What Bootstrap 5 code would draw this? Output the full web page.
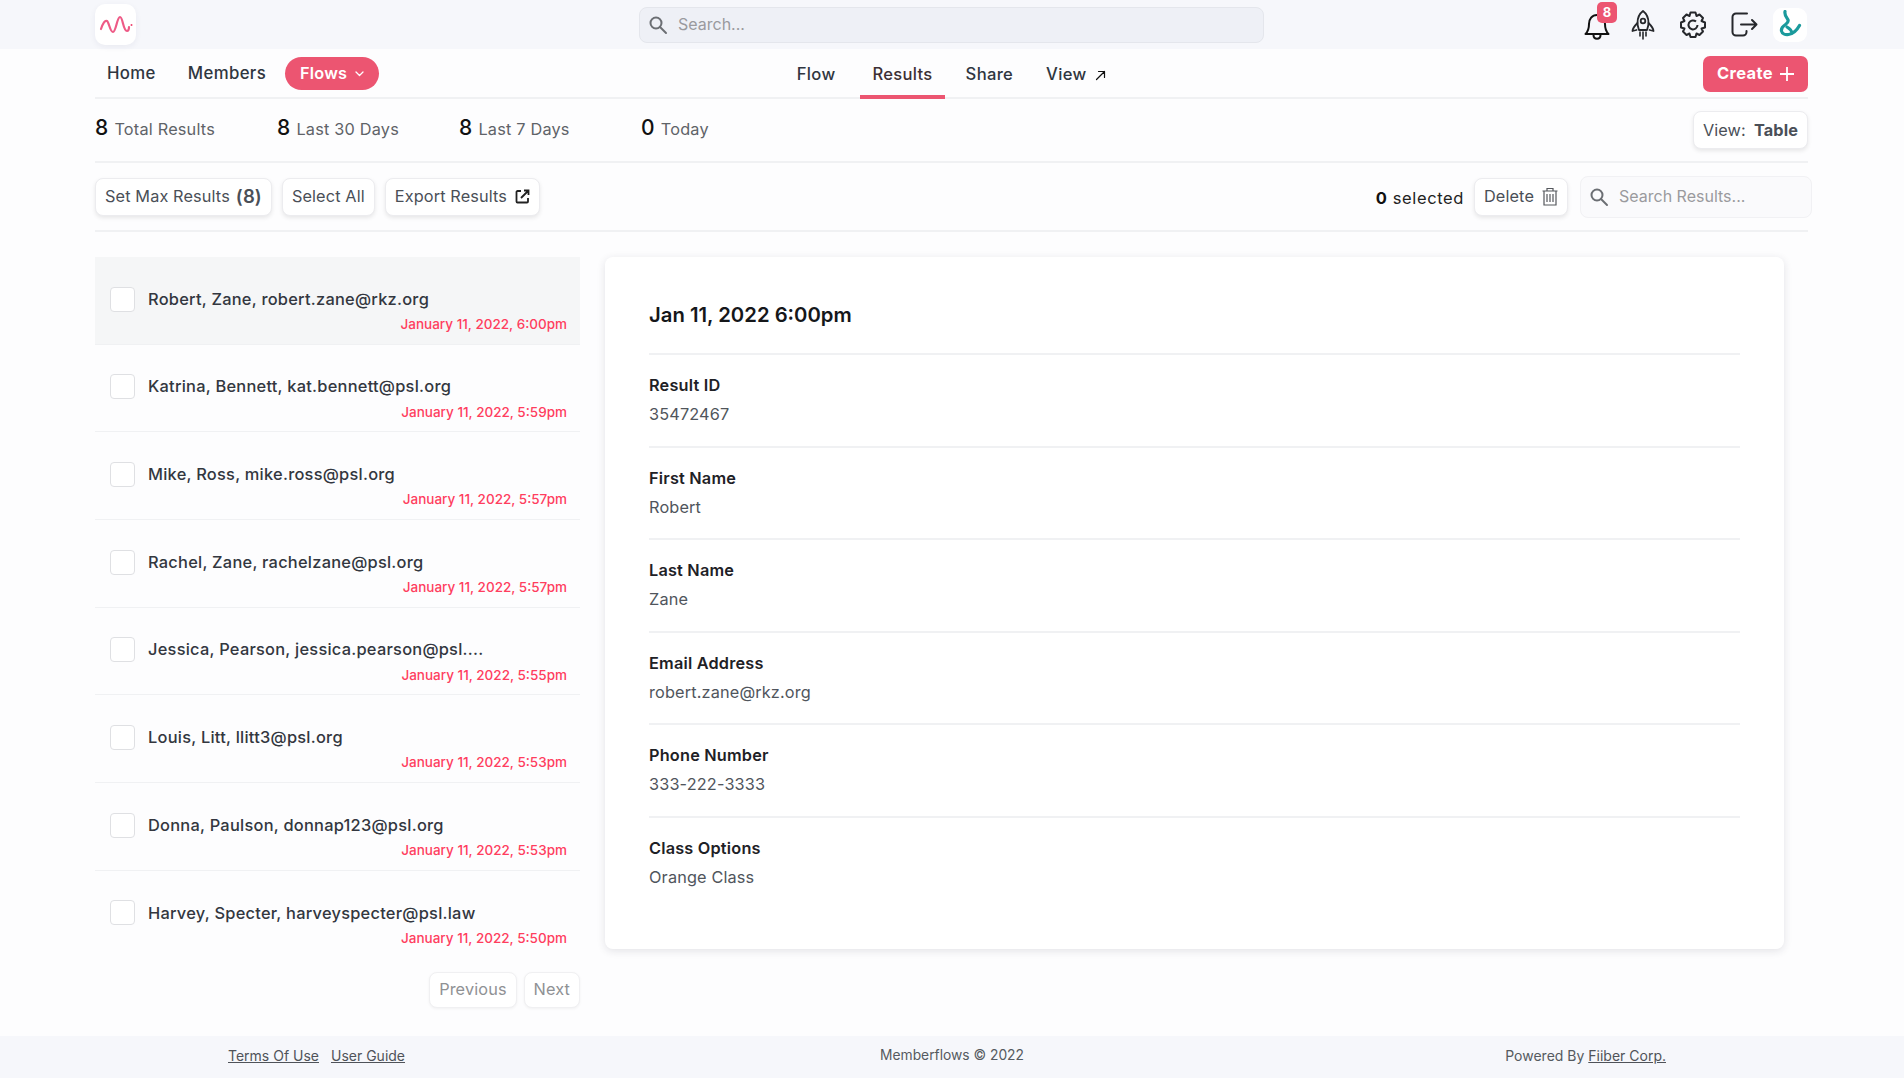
<!DOCTYPE html>
<html lang="en">
<head>
<meta charset="utf-8">
<title>Memberflows Results</title>
<link href="https://cdn.jsdelivr.net/npm/bootstrap@5.3.0/dist/css/bootstrap.min.css" rel="stylesheet">
<style>
html,body{height:100%;}
body{font-family:Inter,"Liberation Sans",sans-serif;background:#fdfdfe;color:#343a40;font-size:16px;overflow:hidden;}
.page{height:1078px;display:flex;flex-direction:column;}
.topstrip{height:49px;background:#f6f7fb;padding:0 96px 0 95px;display:grid;grid-template-columns:1fr 625px 1fr;align-items:center;flex:none;}
.logo-tile{width:41px;height:41px;background:#fff;border-radius:10px;box-shadow:0 2px 6px rgba(30,40,80,.06);display:flex;align-items:center;justify-content:center;}
.top-search{height:36px;background:#eef0f6;border:1px solid #e4e6ec;border-radius:8px;}
.search-in{border:0;background:transparent;outline:0;flex:1;min-width:0;font-size:16px;color:#333;padding:0;margin:-2px 0 0 2px;}
.search-in::placeholder{color:#9a9a9e;}
.top-icons{display:flex;justify-content:flex-end;align-items:center;}
.bell-wrap{position:relative;width:26px;height:30px;margin-right:21px;}
.bell-count{position:absolute;left:13px;top:-8px;width:20px;height:21px;background:#ec5571;color:#fff;border-radius:5px;font-size:13px;font-weight:700;line-height:21px;text-align:center;}
.avatar-tile{width:34px;height:34px;background:#fff;border-radius:9px;display:flex;align-items:center;justify-content:center;margin-left:15px;margin-right:1px;}
.shell{margin:0 96px 0 95px;flex:1;display:flex;flex-direction:column;min-height:0;}
.navline{height:50px;display:grid;grid-template-columns:1fr auto 1fr;align-items:center;border-bottom:2px solid #f0f1f3;flex:none;}
.mainlink{color:#2f3640;font-weight:500;text-decoration:none;font-size:16.8px;letter-spacing:.35px;}
.mainlinks{padding-left:12px;gap:32px;}
.flows-pill{background:#ec5571;color:#fff;font-weight:600;border-radius:17px;height:33px;width:94px;margin-left:-13px;display:flex;align-items:center;justify-content:center;gap:8px;font-size:16.3px;letter-spacing:.2px;text-decoration:none;}
.tabset{display:flex;gap:9px;height:49px;}
.tabset a{padding:0 12px;line-height:50px;color:#2f3640;font-weight:500;text-decoration:none;font-size:16.6px;letter-spacing:.3px;height:50px;}
.tabset a:first-child{margin-right:4px;}
.tabset a.on{border-bottom:4px solid #ec5571;color:#3d3035;}
.create-btn{background:#ec5571;color:#fff;font-weight:700;font-size:16.5px;letter-spacing:.4px;height:36px;width:105px;padding:0;border-radius:7px;border:0;display:flex;align-items:center;justify-content:center;gap:7px;}
.statline{height:64px;display:flex;align-items:center;border-bottom:2px solid #f0f1f3;flex:none;}
.stat-cell{width:182px;display:flex;align-items:baseline;gap:6px;color:#5f6368;font-size:16.3px;letter-spacing:.2px;padding-bottom:4px;}
.stat-cell b{font-weight:500;font-size:21px;color:#111;}
.soft-btn{background:#fff;border:1px solid #ececef;border-radius:8px;box-shadow:0 2px 4px rgba(0,0,0,.09);color:#4a4f57;font-size:16.3px;letter-spacing:.12px;height:38px;padding:0 9px;display:inline-flex;align-items:center;gap:8px;white-space:nowrap;}
.soft-btn:hover{background:#fff;}
.max-num{font-weight:600;font-size:18.5px;margin-left:-2px;}
.toolline{height:69px;display:flex;align-items:center;border-bottom:2px solid #f0f1f3;flex:none;gap:10px;position:relative;}
.sel-count{color:#222;font-size:16.5px;letter-spacing:.6px;margin-left:auto;padding-top:4px;}
.sel-count b{font-weight:700;color:#111;}
.res-search{width:232px;height:42px;margin-right:-4px;background:#fafafc;border:1px solid #f1f1f4;border-radius:8px;margin-left:2px;}
.body-split{display:flex;flex:1;min-height:0;padding-top:25px;gap:25px;}
.left-col{width:485px;flex:none;}
.rec{height:87.7px;background:transparent;border:0;border-bottom:2px solid #f0f1f3;padding:0 13px 0 15px;display:block;}
.rec.picked{background:#f5f6f7;}
.rec-top{display:flex;align-items:center;gap:13px;padding-top:27px;height:57px;}
.tick{width:25px;height:25px;background:#fff;border:1px solid #dfe0e3;border-radius:4px;flex:none;}
.rec-name{font-weight:500;font-size:16.4px;letter-spacing:.25px;color:#33373f;white-space:nowrap;}
.rec-date{color:#ff3e5e;font-weight:500;font-size:13.5px;text-align:right;}
.pager{display:flex;justify-content:flex-end;gap:7px;padding-top:13px;}
.pager .soft-btn{color:#8f9194;height:36px;box-shadow:0 1px 3px rgba(0,0,0,.05);border-color:#f0f0f2;}
.detail{width:1179px;height:692px;background:#fff;border:0;border-radius:8px;box-shadow:0 2px 8px rgba(30,30,60,.12);padding:0 44px;flex:none;}
.detail-head{height:98px;padding-top:20px;display:flex;align-items:center;font-size:20.3px;font-weight:600;color:#15171a;border-bottom:2px solid #f0f1f3;}
.field{height:92.5px;padding-top:19px;border-bottom:2px solid #f0f1f3;}
.field:last-child{border-bottom:0;}
.field-k{font-weight:600;font-size:16.3px;letter-spacing:.2px;color:#1e2126;line-height:22px;}
.field-v{color:#50555c;font-size:16.3px;letter-spacing:.15px;line-height:22px;margin-top:7px;}
.foot{height:42px;background:#f6f7fb;padding:0 238px 3px 228px;display:grid;grid-template-columns:1fr auto 1fr;align-items:center;font-size:14px;color:#555a60;flex:none;}
.foot a{color:#4f5359;}
.foot-mid{padding-left:10px;font-size:13.8px;}
.foot-links{gap:12px;}
.foot-right{text-align:right;}
</style>
</head>
<body>
<div class="page">
  <header class="topstrip">
    <div>
      <div class="logo-tile">
        <svg width="34" height="20" viewBox="0 0 34 20" fill="none"><path d="M2 14C4 8 6 5 8 6s3 11 6 11 4-15 7-15 3 14 7 14c2 0 2-3 2-4" stroke="#ee5a86" stroke-width="2.2" stroke-linecap="round"/><circle cx="32.500" cy="10" r="1" fill="#ee3f6c"/></svg>
      </div>
    </div>
    <div class="top-search d-flex align-items-center gap-2 px-2">
      <svg width="20" height="20" viewBox="0 0 20 20" fill="none" stroke="#6b6e73" stroke-width="2"><circle cx="8" cy="8" r="5.500"/><path d="M12 12l6 6" stroke-linecap="round"/></svg>
      <input class="search-in" placeholder="Search...">
    </div>
    <div class="top-icons">
      <div class="bell-wrap">
        <svg width="26" height="30" viewBox="0 0 26 30" fill="none" stroke="#111" stroke-width="2" stroke-linejoin="round"><path d="M1.500 24c3-3 3.500-5 3.500-10s3-9 8-9 8 4 8 9 .5 7 3.500 10z"/><path d="M9.500 25c0 5 7 5 7 0"/></svg>
        <span class="bell-count">8</span>
      </div>
      <svg class="me-4" width="24" height="30" viewBox="0 0 24 30" fill="none" stroke="#26282c" stroke-width="1.800" stroke-linejoin="round" stroke-linecap="round"><path d="M12 1c4 3 5.500 7 5.500 12 0 3-1 5-1.500 7H8c-.5-2-1.500-4-1.500-7C6.500 8 8 4 12 1z"/><circle cx="12" cy="11" r="2.300"/><path d="M6.500 13c-3 3-5 5-5 8l4-1M17.500 13c3 3 5 5 5 8l-4-1"/><path d="M12 22v7M9 22v4M15 22v4" stroke-width="1.600"/></svg>
      <svg class="me-4" width="28" height="28" viewBox="0 0 28 28" fill="none" stroke="#26282c" stroke-width="2" stroke-linejoin="round"><path d="M11.500 1.500h5l1 3.500 3-1.500 3.500 3.500-1.500 3 3.500 1.500v5l-3.500 1 1.500 3-3.500 3.500-3-1.500-1 3.500h-5l-1-3.500-3 1.500L4 20.500l1.500-3L2 16.500v-5l3.500-1.500L4 7l3.500-3.500 3 1.500z"/><path d="M18.500 14a4.500 4.500 0 1 1-1.500-3.400"/></svg>
      <svg width="27" height="25" viewBox="0 0 27 25" fill="none" stroke="#26282c" stroke-width="2" stroke-linecap="round" stroke-linejoin="round"><path d="M16 1.500H5a3.500 3.500 0 0 0-3.500 3.500v15A3.500 3.500 0 0 0 5 23.500h7a3.500 3.500 0 0 0 3.500-3.500v-1"/><path d="M10 12.500h15.500M21 8l4.500 4.500L21 17"/></svg>
      <div class="avatar-tile">
        <svg width="24" height="30" viewBox="0 0 24 30" fill="none" stroke="#1b9a9c" stroke-width="3.200" stroke-linecap="round" stroke-linejoin="round"><path d="M7 1.500c-.5 3 .5 5 2.500 7.500 1.500 2 0 4-2 5.500-3 2-4.500 4-4 6.500.5 2.500 3.500 4 7 3.500 5-.7 8.500-4.500 11-9"/><path d="M9 17c2.500 1.500 4.500 3 5 6"/></svg>
      </div>
    </div>
  </header>

  <main class="shell">
    <nav class="navline">
      <div class="d-flex align-items-center mainlinks">
        <a class="mainlink" href="#">Home</a>
        <a class="mainlink" href="#">Members</a>
        <a class="flows-pill" href="#">Flows
          <svg width="9" height="6" viewBox="0 0 9 6" fill="none" stroke="#fff" stroke-width="1.300" stroke-linecap="round" stroke-linejoin="round"><path d="M1 1l3.500 3.500L8 1"/></svg>
        </a>
      </div>
      <div class="tabset">
        <a href="#">Flow</a>
        <a href="#" class="on">Results</a>
        <a href="#">Share</a>
        <a href="#">View
          <svg class="ms-1" width="11" height="11" viewBox="0 0 11 11" fill="none" stroke="#111" stroke-width="1.200" stroke-linecap="round" stroke-linejoin="round"><path d="M1.500 9.500l8-8M3.500 1.500h6v6"/></svg>
        </a>
      </div>
      <div class="d-flex justify-content-end">
        <button class="btn create-btn" type="button">Create
          <svg width="14" height="14" viewBox="0 0 14 14" stroke="#fff" stroke-width="1.800"><path d="M7 0v14M0 7h14"/></svg>
        </button>
      </div>
    </nav>

    <section class="statline">
      <div class="stat-cell"><b>8</b> Total Results</div>
      <div class="stat-cell"><b>8</b> Last 30 Days</div>
      <div class="stat-cell"><b>8</b> Last 7 Days</div>
      <div class="stat-cell"><b>0</b> Today</div>
      <button class="btn soft-btn ms-auto" type="button">View: <b class="fw-bold">Table</b></button>
    </section>

    <section class="toolline">
      <button class="btn soft-btn" type="button">Set Max Results <b class="max-num">(8)</b></button>
      <button class="btn soft-btn" type="button">Select All</button>
      <button class="btn soft-btn" type="button">Export Results
        <svg width="15" height="15" viewBox="0 0 15 15" fill="none" stroke="#222" stroke-width="1.800"><path d="M6 2H2.500A1 1 0 0 0 1.500 3v9.500a1 1 0 0 0 1 1H12a1 1 0 0 0 1-1V9"/><path d="M6 9l7-7M9 1.500h4.500V6"/></svg>
      </button>
      <span class="sel-count"><b>0</b> selected</span>
      <button class="btn soft-btn" type="button">Delete
        <svg width="16" height="19" viewBox="0 0 16 19" fill="none" stroke="#55585d" stroke-width="1.200"><path d="M.5 4h15M5 4V1.500h6V4M2 4v14h12V4M5 7v8M8 7v8M11 7v8"/></svg>
      </button>
      <div class="res-search d-flex align-items-center gap-2 px-2">
        <svg width="20" height="20" viewBox="0 0 20 20" fill="none" stroke="#6b6e73" stroke-width="2"><circle cx="8" cy="8" r="5.500"/><path d="M12 12l6 6" stroke-linecap="round"/></svg>
        <input class="search-in" placeholder="Search Results...">
      </div>
    </section>

    <div class="body-split">
      <div class="left-col">
        <div class="list-group list-group-flush">
          <div class="list-group-item rec picked"><div class="rec-top"><span class="tick"></span><span class="rec-name">Robert, Zane, robert.zane@rkz.org</span></div><div class="rec-date">January 11, 2022, 6:00pm</div></div>
          <div class="list-group-item rec"><div class="rec-top"><span class="tick"></span><span class="rec-name">Katrina, Bennett, kat.bennett@psl.org</span></div><div class="rec-date">January 11, 2022, 5:59pm</div></div>
          <div class="list-group-item rec"><div class="rec-top"><span class="tick"></span><span class="rec-name">Mike, Ross, mike.ross@psl.org</span></div><div class="rec-date">January 11, 2022, 5:57pm</div></div>
          <div class="list-group-item rec"><div class="rec-top"><span class="tick"></span><span class="rec-name">Rachel, Zane, rachelzane@psl.org</span></div><div class="rec-date">January 11, 2022, 5:57pm</div></div>
          <div class="list-group-item rec"><div class="rec-top"><span class="tick"></span><span class="rec-name">Jessica, Pearson, jessica.pearson@psl....</span></div><div class="rec-date">January 11, 2022, 5:55pm</div></div>
          <div class="list-group-item rec"><div class="rec-top"><span class="tick"></span><span class="rec-name">Louis, Litt, llitt3@psl.org</span></div><div class="rec-date">January 11, 2022, 5:53pm</div></div>
          <div class="list-group-item rec"><div class="rec-top"><span class="tick"></span><span class="rec-name">Donna, Paulson, donnap123@psl.org</span></div><div class="rec-date">January 11, 2022, 5:53pm</div></div>
          <div class="list-group-item rec"><div class="rec-top"><span class="tick"></span><span class="rec-name">Harvey, Specter, harveyspecter@psl.law</span></div><div class="rec-date">January 11, 2022, 5:50pm</div></div>
        </div>
        <div class="pager">
          <button class="btn soft-btn" type="button">Previous</button>
          <button class="btn soft-btn" type="button">Next</button>
        </div>
      </div>
      <div class="card detail">
        <div class="detail-head">Jan 11, 2022 6:00pm</div>
        <div class="field"><div class="field-k">Result ID</div><div class="field-v">35472467</div></div>
        <div class="field"><div class="field-k">First Name</div><div class="field-v">Robert</div></div>
        <div class="field"><div class="field-k">Last Name</div><div class="field-v">Zane</div></div>
        <div class="field"><div class="field-k">Email Address</div><div class="field-v">robert.zane@rkz.org</div></div>
        <div class="field"><div class="field-k">Phone Number</div><div class="field-v">333-222-3333</div></div>
        <div class="field"><div class="field-k">Class Options</div><div class="field-v">Orange Class</div></div>
      </div>
    </div>
  </main>

  <footer class="foot">
    <div class="d-flex foot-links"><a href="#">Terms Of Use</a><a href="#">User Guide</a></div>
    <div class="foot-mid">Memberflows © 2022</div>
    <div class="foot-right">Powered By <a href="#">Fiiber Corp.</a></div>
  </footer>
</div>
<script src="https://cdn.jsdelivr.net/npm/bootstrap@5.3.0/dist/js/bootstrap.bundle.min.js"></script>
</body>
</html>
